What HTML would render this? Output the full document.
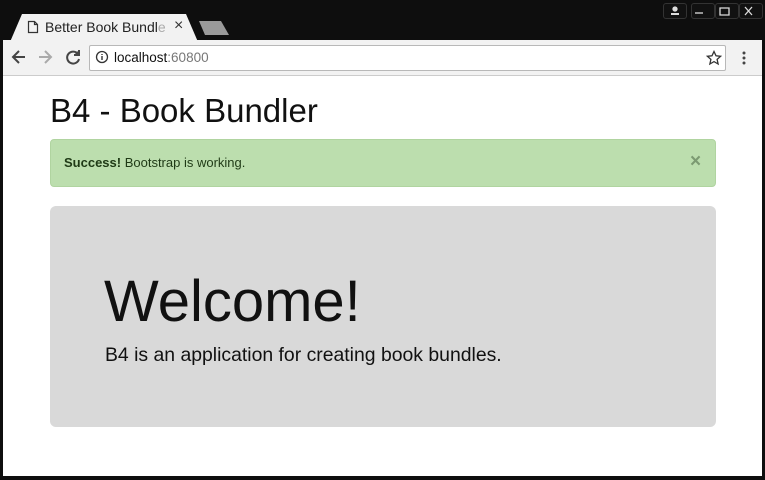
<!DOCTYPE html><html><head><style>
*{margin:0;padding:0;box-sizing:border-box}
body{width:765px;height:480px;background:#0e0e0e;position:relative;overflow:hidden;font-family:"Liberation Sans",sans-serif}
.tab{position:absolute;left:10px;top:14px;width:188px;height:28px;background:#f2f2f2;clip-path:polygon(0 100%,12px 0,176px 0,100% 100%)}
.tab2{position:absolute;left:199px;top:21px;width:30px;height:14px;background:#9a9a9a;clip-path:polygon(0 0,22px 0,100% 100%,6px 100%)}
.tt{position:absolute;left:45px;top:19px;font-size:14px;color:#222}
.tb{position:absolute;left:3px;top:40px;width:759px;height:36px;background:#f2f2f2;border-bottom:1px solid #ccc}
.url{position:absolute;left:89px;top:45px;width:637px;height:26px;background:#fff;border:1px solid #b8b8b8;border-radius:2px}
.content{position:absolute;left:3px;top:76px;width:759px;height:400px;background:#fff}
.wb{position:absolute;top:3px;width:24px;height:16px;border:1px solid #333;border-radius:3px;background:#111}
</style></head><body>
<div class="tab"></div><div class="tab2"></div>
<svg style="position:absolute;left:27px;top:20px" width="12" height="14"><path d="M1.5 1.5h6l3 3v8h-9z M7.5 1.5v3h3" fill="none" stroke="#333" stroke-width="1.2"/></svg>
<div class="tt">Better Book Bundl<span style="color:#aaa">e</span></div>
<div style="position:absolute;left:174px;top:17px;font-size:16px;color:#333">×</div>
<div class="wb" style="left:663px"></div><div class="wb" style="left:691px"></div><div class="wb" style="left:715px"></div><div class="wb" style="left:739px"></div>
<svg style="position:absolute;left:663px;top:3px" width="100" height="16" stroke="#ddd" fill="none" stroke-width="1.3"><circle cx="12" cy="6" r="2" fill="#ddd"/><path d="M8 11h8" stroke-width="2"/><path d="M32 10h8"/><path d="M57 5h9v7h-9z"/><path d="M82 4l7 8M89 4l-7 8"/></svg>
<div class="tb"></div>
<svg style="position:absolute;left:10px;top:48px" width="70" height="20" fill="none" stroke-width="2"><path d="M3 9h12M9 3l-6 6 6 6" stroke="#444"/><path d="M29 9h12M35 3l6 6-6 6" stroke="#aaa"/><path d="M68 6a6 6 0 1 0 1 5" stroke="#444"/><path d="M69 2v5h-5" stroke="#444" fill="#444"/></svg>
<div class="url"></div>
<svg style="position:absolute;left:95px;top:50px" width="16" height="16"><circle cx="7" cy="7" r="5.5" fill="none" stroke="#333" stroke-width="1.3"/><path d="M7 6v4M7 4v1" stroke="#333" stroke-width="1.4"/></svg>
<div style="position:absolute;left:114px;top:50px;font-size:13.5px;color:#111">localhost<span style="color:#777">:60800</span></div>
<svg style="position:absolute;left:706px;top:50px" width="16" height="16"><path d="M8 1.5l2 4.3 4.6.5-3.5 3.1 1 4.6L8 11.6 3.9 14l1-4.6L1.4 6.3l4.6-.5z" fill="none" stroke="#333" stroke-width="1.3"/></svg>
<svg style="position:absolute;left:741px;top:50px" width="6" height="16" fill="#444"><circle cx="3" cy="3" r="1.5"/><circle cx="3" cy="8" r="1.5"/><circle cx="3" cy="13" r="1.5"/></svg>
<div class="content"></div>
<div style="position:absolute;left:50px;top:92px;font-size:33px;color:#111">B4 - Book Bundler</div>
<div style="position:absolute;left:50px;top:139px;width:666px;height:48px;background:#bcdeae;border:1px solid #b0d4a0;border-radius:4px"></div>
<div style="position:absolute;left:64px;top:155px;font-size:13px;color:#1f3a16"><b>Success!</b> Bootstrap is working.</div>
<div style="position:absolute;left:690px;top:151px;font-size:19px;color:#7c9a72;font-weight:bold">×</div>
<div style="position:absolute;left:50px;top:206px;width:666px;height:221px;background:#d9d9d9;border-radius:6px"></div>
<div style="position:absolute;left:104px;top:268px;font-size:58px;color:#111">Welcome!</div>
<div style="position:absolute;left:105px;top:344px;font-size:19.4px;color:#111">B4 is an application for creating book bundles.</div>
</body></html>
